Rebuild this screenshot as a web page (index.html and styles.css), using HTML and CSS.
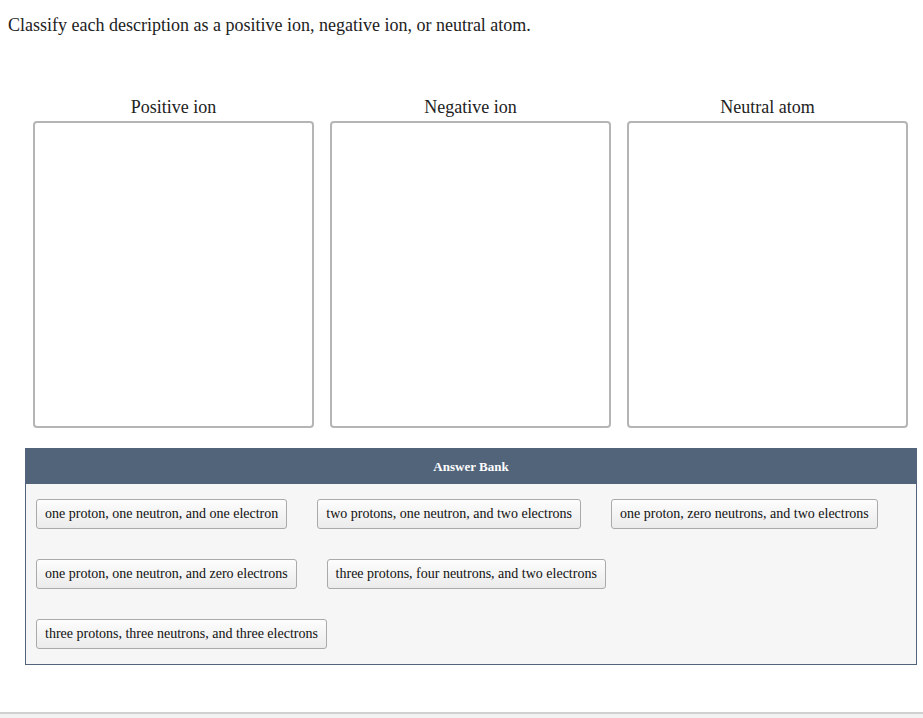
FILE: index.html
```html
<!DOCTYPE html>
<html>

<head>
    <title>Classify ions</title>
    <meta charset="utf-8">
    <meta name="viewport" content="width=device-width, initial-scale=1.0">
    <link rel="stylesheet" href="styles.css">
</head>

<body>
    <div class="page">
        <p class="prompt">Classify each description as a positive ion, negative ion, or neutral atom.</p>

        <div class="sorter">
            <div class="bins">
                <div class="bin">
                    <div class="bin-title">Positive ion</div>
                    <div class="bin-drop"></div>
                </div>
                <div class="bin">
                    <div class="bin-title">Negative ion</div>
                    <div class="bin-drop"></div>
                </div>
                <div class="bin">
                    <div class="bin-title">Neutral atom</div>
                    <div class="bin-drop"></div>
                </div>
            </div>

            <div class="bank">
                <div class="bank-head">Answer Bank</div>
                <div class="bank-items">
                    <span class="chip">one proton, one neutron, and one electron</span>
                    <span class="chip">two protons, one neutron, and two electrons</span>
                    <span class="chip">one proton, zero neutrons, and two electrons</span>
                    <span class="chip">one proton, one neutron, and zero electrons</span>
                    <span class="chip">three protons, four neutrons, and two electrons</span>
                    <span class="chip">three protons, three neutrons, and three electrons</span>
                </div>
            </div>
        </div>
    </div>
    <div class="footer"></div>
</body>

</html>
```

FILE: styles.css
```css
body {
    margin: 0;
    font-family: "Liberation Serif", "Times New Roman", serif;
    color: #222;
    background-color: #fff;
}

.page {
    padding: 15px 0 0 8px;
    height: 697px;
}

.prompt {
    margin: 0;
    font-size: 18px;
    line-height: 21px;
}

.sorter {
    margin: 60px 6px 0 17px;
}

.bins {
    display: grid;
    grid-template-columns: 1fr 1fr 1fr;
    gap: 16px;
    padding: 0 9px 0 8px;
}

.bin-title {
    text-align: center;
    font-size: 18px;
    line-height: 22px;
    margin-bottom: 3px;
}

.bin-drop {
    height: 303px;
    border: 2px solid #b5b5b5;
    border-radius: 4px;
    background-color: #fff;
}

.bank {
    margin-top: 20px;
    border: 1px solid #51647a;
    background-color: #f6f6f6;
}

.bank-head {
    background-color: #51647a;
    color: #fff;
    font-weight: bold;
    font-size: 13px;
    height: 35px;
    line-height: 35px;
    text-align: center;
}

.bank-items {
    display: flex;
    flex-wrap: wrap;
    gap: 30px;
    padding: 15px 10px 15px 10px;
}

.chip {
    display: inline-block;
    font-size: 14px;
    line-height: 26px;
    padding: 1px 8px 1px 8px;
    border: 1px solid #aaa;
    border-radius: 3px;
    background: linear-gradient(#fdfdfd, #ebebeb);
    color: #111;
    white-space: nowrap;
}

.footer {
    height: 6px;
    border-top: 2px solid #d0d0d0;
    background-color: #f2f2f2;
}
```
